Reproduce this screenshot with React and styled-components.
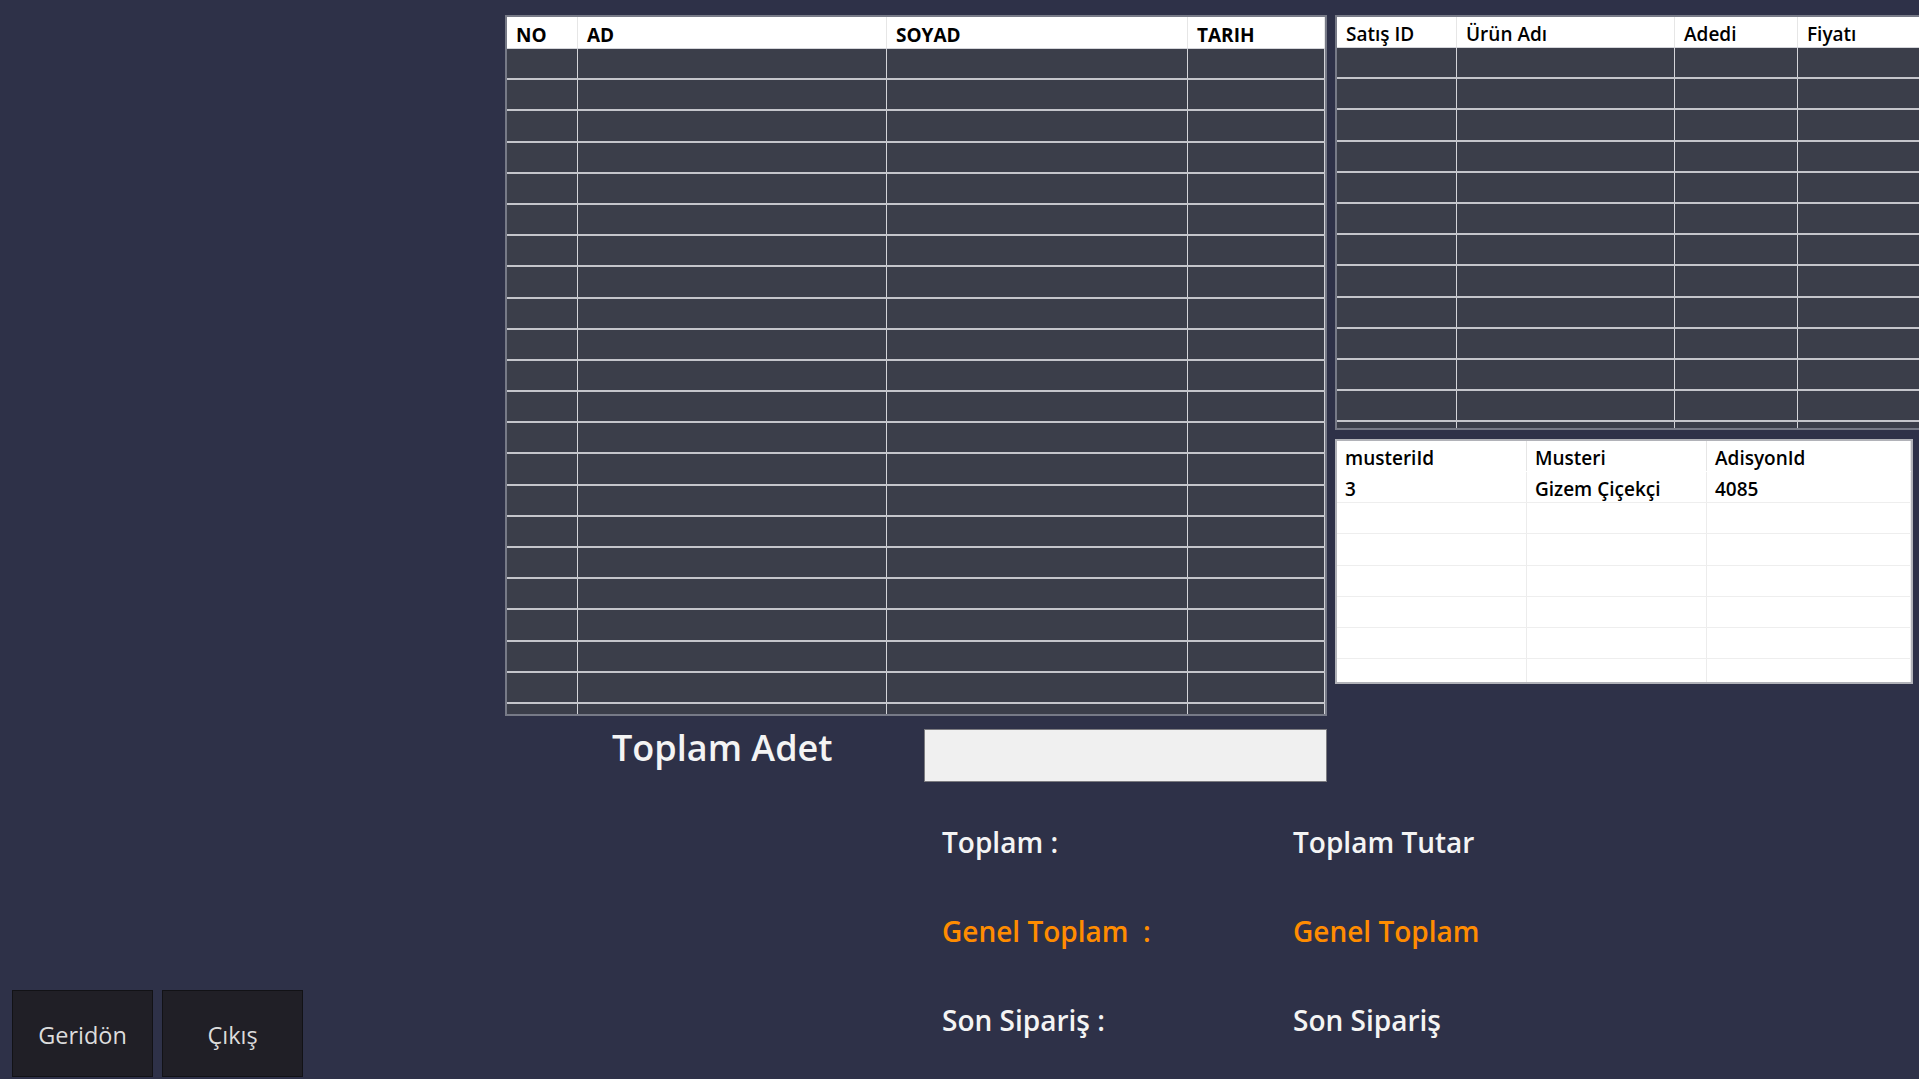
import React from "react";
import styled, { createGlobalStyle } from "styled-components";

const GlobalStyle = createGlobalStyle`
  html, body { margin: 0; padding: 0; background: #2e3148; }
  body { font-family: "Open Sans", "Noto Sans", "Liberation Sans", sans-serif; }
  * { box-sizing: border-box; }
`;

const Screen = styled.div`
  width: 1919px;
  height: 1079px;
  background: #2e3148;
  display: flex;
  overflow: hidden;
`;

const SidePane = styled.div`
  width: 505px;
  flex: none;
  display: flex;
  flex-direction: column;
  justify-content: flex-end;
  padding: 0 0 2px 12px;
`;

const ButtonRow = styled.div`
  display: flex;
  gap: 9px;
`;

const ActionButton = styled.button`
  width: 141px;
  height: 87px;
  background: #201f26;
  border: 1px solid #121216;
  color: #dcdcdc;
  font-family: "Open Sans", "Noto Sans", sans-serif;
  font-size: 23.5px;
  font-weight: 400;
  padding: 3px 0 0 0;
  display: flex;
  align-items: center;
  justify-content: center;
`;

const MainPane = styled.div`
  flex: 1;
  min-width: 0;
  display: flex;
  flex-direction: column;
  padding-top: 15px;
`;

const TopRow = styled.div`
  display: flex;
  gap: 8px;
  align-items: flex-start;
`;

const RightColumn = styled.div`
  width: 640px;
  flex: none;
  display: flex;
  flex-direction: column;
  gap: 9px;
`;

const GridFrame = styled.div`
  width: ${(p) => p.$width};
  height: ${(p) => p.$height}px;
  border: 2px solid ${(p) => (p.$light ? "#b1b2b8" : "#777a87")};
  background: ${(p) => (p.$light ? "#ffffff" : "#3b3e4a")};
  overflow: hidden;
  flex: none;
`;

const GridHeader = styled.div`
  display: grid;
  grid-template-columns: ${(p) => p.$cols};
  height: ${(p) => p.$h}px;
  background: #ffffff;
  border-bottom: 1px solid ${(p) => (p.$light ? "#ffffff" : "#d4d5da")};
`;

const HeaderCell = styled.div`
  display: flex;
  align-items: flex-end;
  padding: 0 0 1px ${(p) => p.$pad}px;
  font-size: 19px;
  font-weight: ${(p) => p.$weight};
  color: #000;
  white-space: nowrap;
  overflow: hidden;
  border-right: 1px solid #e6e6e6;
  line-height: 24px;
`;

const GridRow = styled.div`
  display: grid;
  grid-template-columns: ${(p) => p.$cols};
  height: ${(p) => p.$h}px;
  border-bottom: ${(p) => (p.$light ? "1px solid #eeeeee" : "2px solid #c4c5cb")};
`;

const GridCell = styled.div`
  border-right: 1px solid ${(p) => (p.$light ? "#ececec" : "#d3d4d9")};
  display: flex;
  align-items: flex-end;
  padding: 0 0 1px 8px;
  font-size: 19px;
  font-weight: 600;
  color: #000;
  line-height: 24px;
  white-space: nowrap;
  overflow: hidden;
`;

const CountRow = styled.div`
  display: grid;
  grid-template-columns: 419px 403px;
  height: 53px;
  margin-top: 13px;
`;

const CountLabel = styled.div`
  padding-left: 107px;
  margin-top: 1px;
  font-size: 36px;
  line-height: 36px;
  font-weight: 600;
  color: #f4f4f4;
  white-space: nowrap;
`;

const CountBox = styled.div`
  background: #f0f0f0;
  border: 1px solid #7b7b80;
`;

const Summary = styled.div`
  display: grid;
  grid-template-columns: 351px auto;
  row-gap: 61px;
  margin-top: 46px;
  padding-left: 437px;
`;

const SummaryText = styled.div`
  font-size: 28px;
  line-height: 28px;
  font-weight: 600;
  color: ${(p) => (p.$accent ? "#ff8c00" : "#f4f4f4")};
  white-space: pre;
`;

const DataGrid = ({ cols, columns, width, height, headerH, rowH, rows, light, weight, data = [] }) => (
  <GridFrame $width={width} $height={height} $light={light}>
    <GridHeader $cols={cols} $h={headerH} $light={light}>
      {columns.map((c) => (
        <HeaderCell key={c} $pad={light ? 8 : 9} $weight={weight}>
          {c}
        </HeaderCell>
      ))}
    </GridHeader>
    {Array.from({ length: rows }).map((_, r) => (
      <GridRow key={r} $cols={cols} $h={rowH} $light={light}>
        {columns.map((c, i) => (
          <GridCell key={c} $light={light}>
            {data[r] ? data[r][i] : ""}
          </GridCell>
        ))}
      </GridRow>
    ))}
  </GridFrame>
);

export default function App() {
  return (
    <>
      <GlobalStyle />
      <Screen>
        <SidePane>
          <ButtonRow>
            <ActionButton>Geridön</ActionButton>
            <ActionButton>Çıkış</ActionButton>
          </ButtonRow>
        </SidePane>
        <MainPane>
          <TopRow>
            <DataGrid
              cols="71px 309px 301px 1fr"
              columns={["NO", "AD", "SOYAD", "TARIH"]}
              width="822px"
              height={701}
              headerH={32}
              rowH={31.2}
              rows={22}
              weight={700}
            />
            <RightColumn>
              <DataGrid
                cols="120px 218px 123px 1fr"
                columns={["Satış ID", "Ürün Adı", "Adedi", "Fiyatı"]}
                width="100%"
                height={415}
                headerH={31}
                rowH={31.2}
                rows={13}
                weight={600}
              />
              <DataGrid
                cols="190px 180px 1fr"
                columns={["musteriId", "Musteri", "AdisyonId"]}
                width="578px"
                height={245}
                headerH={31}
                rowH={31.2}
                rows={8}
                light
                weight={600}
                data={[["3", "Gizem Çiçekçi", "4085"]]}
              />
            </RightColumn>
          </TopRow>
          <CountRow>
            <CountLabel>Toplam Adet</CountLabel>
            <CountBox />
          </CountRow>
          <Summary>
            <SummaryText>Toplam :</SummaryText>
            <SummaryText>Toplam Tutar</SummaryText>
            <SummaryText $accent>{"Genel Toplam  :"}</SummaryText>
            <SummaryText $accent>Genel Toplam</SummaryText>
            <SummaryText>Son Sipariş :</SummaryText>
            <SummaryText>Son Sipariş</SummaryText>
          </Summary>
        </MainPane>
      </Screen>
    </>
  );
}
